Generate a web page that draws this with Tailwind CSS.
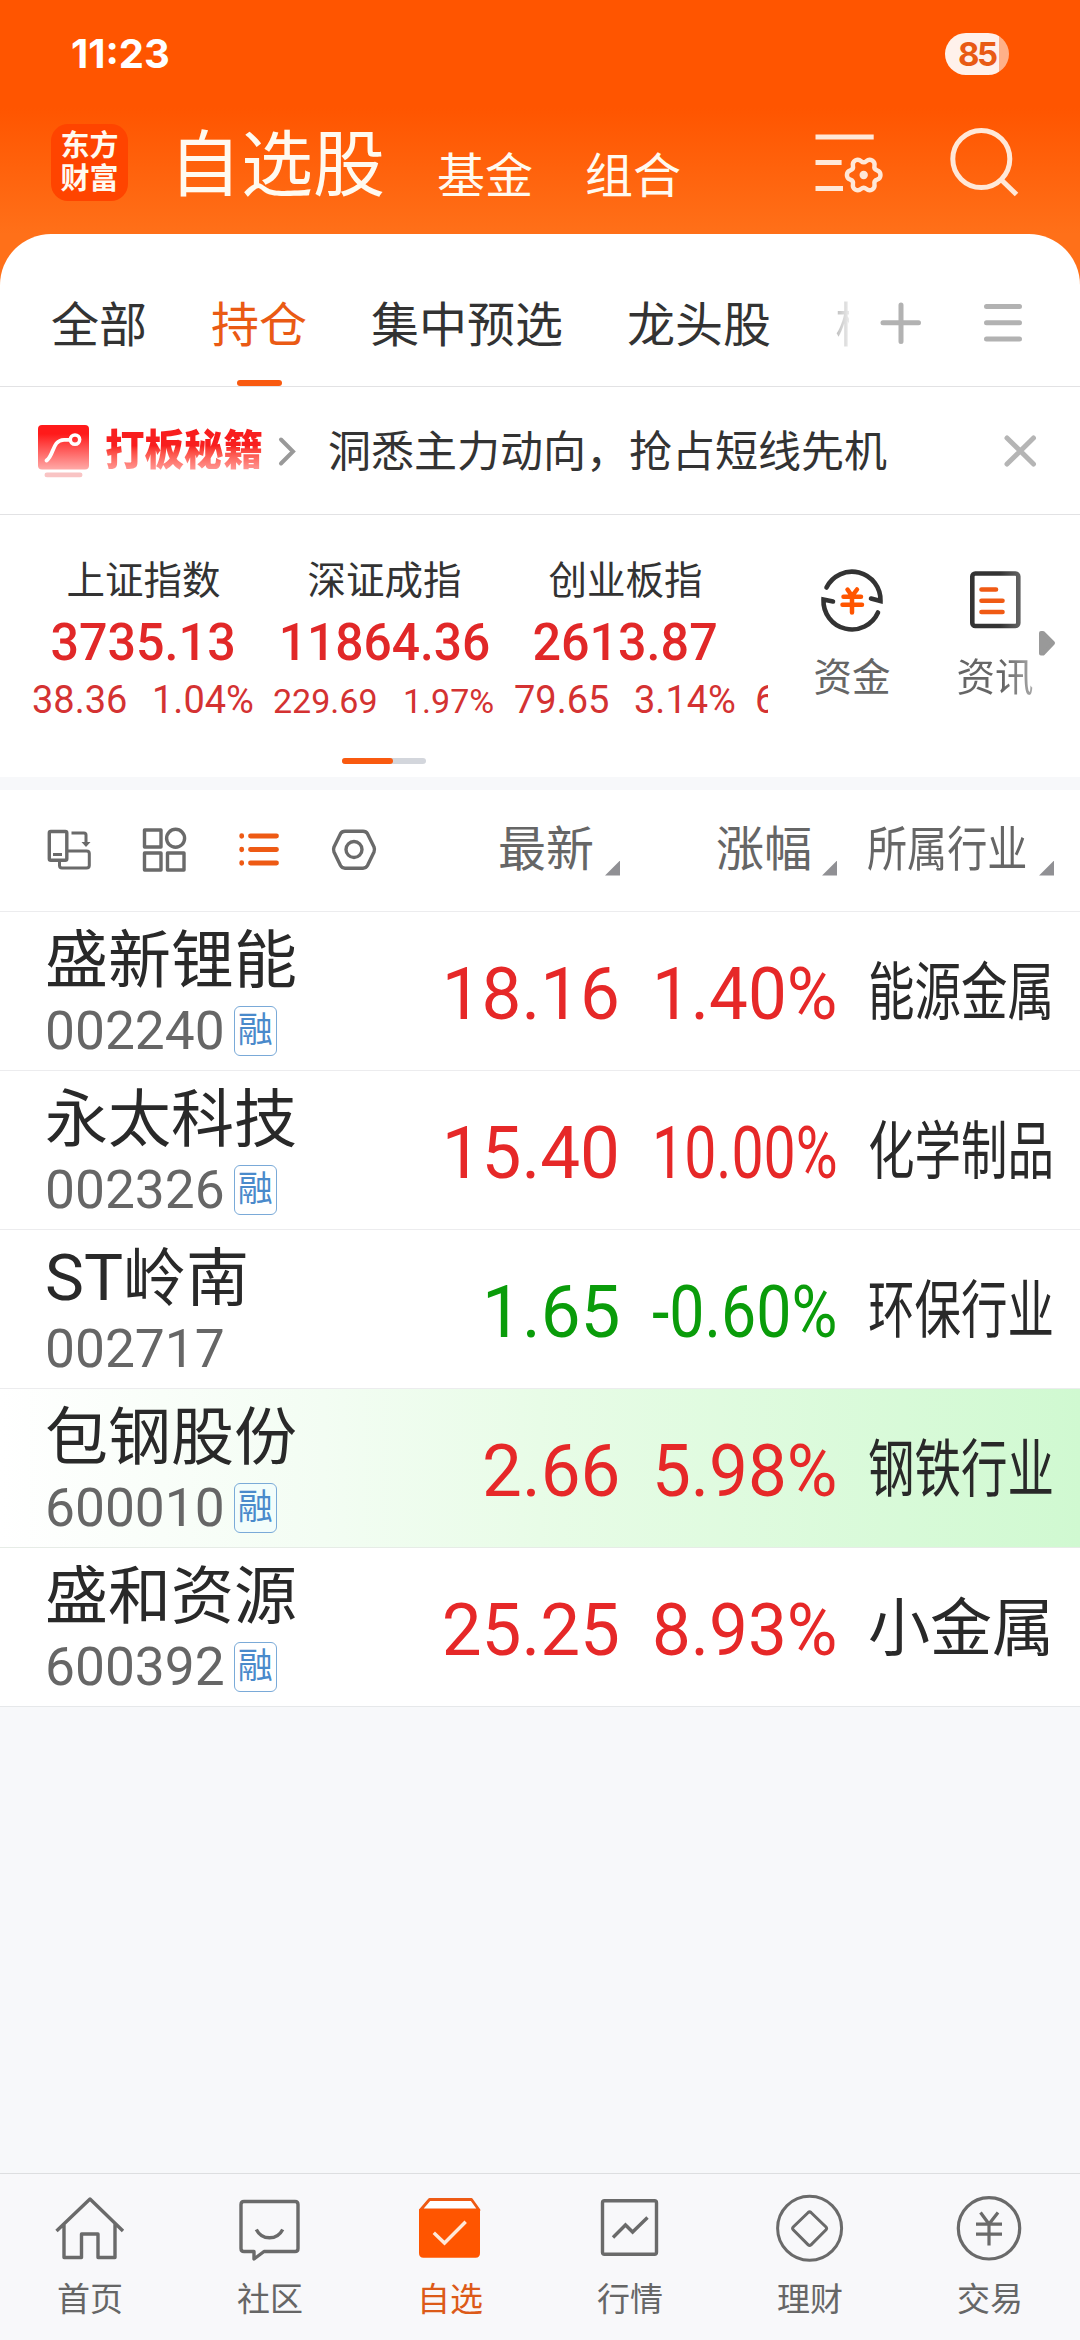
<!DOCTYPE html>
<html lang="zh-CN">
<head>
<meta charset="utf-8">
<meta name="viewport" content="width=device-width">
<title>自选股</title>
<script src="https://cdn.jsdelivr.net/npm/@tailwindcss/browser@4"></script>
</head>
<body class="bg-[#f7f8fa]">
<div class="flex h-[2340px] w-[1080px] flex-col overflow-hidden whitespace-nowrap bg-[#f7f8fa] font-['Roboto','Noto_Sans_CJK_SC',sans-serif] text-[#333]">

  <!-- Status bar and title bar -->
  <header class="h-[300px] shrink-0 bg-[linear-gradient(to_bottom,#ff5500_108px,#ff7019_234px)]">
    <div class="flex h-[108px] items-center justify-between pl-[71px] pr-[71px]">
      <div class="font-['Inter','Roboto',sans-serif] text-[40px] font-bold leading-none text-white">11:23</div>
      <div class="flex h-[42px] w-[64px] items-center rounded-full bg-[linear-gradient(to_right,#fff1eb_54px,#ffb088_54px)] pl-[13px] font-['Inter','Roboto',sans-serif] text-[33px] font-bold leading-none tracking-[-2.5px] text-[#e85a14]">85</div>
    </div>
    <div class="flex h-[126px] text-[#fffaf0]">
      <div class="ml-[51px] mt-[16px] flex h-[77px] w-[77px] flex-col items-center rounded-[17px] bg-[#ff4400] pt-[6px] text-[29px] font-bold leading-[33px]">
        <span>东方</span><span>财富</span>
      </div>
      <div class="ml-[41px] mt-[13px] text-[72px] leading-[90px]">自选股</div>
      <div class="ml-[52px] mt-[39px] text-[48px] leading-[60px]">基金</div>
      <div class="ml-[52px] mt-[39px] text-[48px] leading-[60px]">组合</div>
      <svg class="ml-[129px] mt-[12px] h-[84px] w-[80px]" viewBox="810 120 80 84" fill="none" stroke="#ffe8d8">
        <path d="M815.5 137H873.7M815.5 162.5H841.6M815.5 188.5H843" stroke-width="5"/>
        <g transform="translate(863.7 175)"><path d="M16.800 0Q16.800 3.600 13.400 4.700Q10 5.800 10.750 9.300Q11.500 12.800 8.400 14.600Q5.300 16.400 2.650 13.950Q0 11.500 -2.650 13.950Q-5.300 16.400 -8.400 14.600Q-11.500 12.800 -10.750 9.300Q-10 5.800 -13.400 4.700Q-16.800 3.600 -16.800 0Q-16.800 -3.600 -13.400 -4.700Q-10 -5.800 -10.750 -9.300Q-11.500 -12.800 -8.400 -14.600Q-5.300 -16.400 -2.650 -13.950Q0 -11.500 2.650 -13.950Q5.300 -16.400 8.400 -14.600Q11.500 -12.800 10.750 -9.300Q10 -5.800 13.400 -4.700Q16.800 -3.600 16.800 0Z" stroke-width="4.4"/><circle r="4.2" fill="#ffe8d8" stroke="none"/></g>
      </svg>
      <svg class="ml-[50px] mt-[12px] h-[84px] w-[90px]" viewBox="940 120 90 84" fill="none" stroke="#ffe8d8" stroke-width="5">
        <circle cx="981.3" cy="159" r="28.5"/><path d="M1001.5 180L1016.5 194.5"/>
      </svg>
    </div>
  </header>

  <!-- Group tabs -->
  <nav class="-mt-[66px] flex h-[153px] shrink-0 rounded-t-[51px] border-b border-[#e2e2e4] bg-white pl-[51px] text-[48px] leading-[60px]">
    <div class="flex w-[798px] gap-[64px] overflow-hidden pt-[62px]">
      <span>全部</span>
      <span class="flex flex-col items-center text-[#ea5a14]">持仓<i class="mt-[24px] h-[6px] w-[45px] rounded-full bg-[#f95a10]"></i></span>
      <span>集中预选</span>
      <span>龙头股</span>
      <span class="bg-linear-to-r from-[#bbb] to-white to-[20px] bg-clip-text text-transparent">核心</span>
    </div>
    <svg class="ml-[21px] mt-[56px] h-[66px] w-[180px]" viewBox="870 290 180 66" stroke="#b2b2b2" stroke-width="5" stroke-linecap="round">
      <path d="M883 322.7H918.5M901 305V341.5M986.500 306.500H1019.500M986.500 322.700H1019.500M986.500 339H1019.500"/>
    </svg>
  </nav>

  <!-- Promo strip -->
  <section class="flex h-[128px] shrink-0 items-center border-b border-[#e2e2e4] bg-white pl-[38px]">
    <svg class="h-[56px] w-[52px]" viewBox="38 422 52 56" fill="none">
      <defs><linearGradient id="g" x1="0" y1="0" x2="0" y2="1"><stop offset=".2" stop-color="#ff1a1a"/><stop offset="1" stop-color="#ffaaa8"/></linearGradient></defs>
      <rect x="38" y="424" width="51" height="44.500" rx="4" fill="url(#g)"/>
      <rect x="44.500" y="471.500" width="38" height="4.800" rx="2.400" fill="#f9c4c4"/>
      <path d="M46.500 459.500C54 455 52 439 64 438.800H70" stroke="#fff" stroke-width="3.800" stroke-linecap="round"/>
      <circle cx="75" cy="438.600" r="4.700" stroke="#fff" stroke-width="3.500"/>
    </svg>
    <div class="ml-[15px] origin-center scale-y-[1.06] bg-linear-to-b from-[#f81e1e] from-40% to-[#ff9c9a] to-90% bg-clip-text text-[39.5px] font-black leading-[48px] text-transparent">打板秘籍</div>
    <svg class="ml-[13px] h-[34px] w-[24px]" viewBox="276 433 24 34" fill="none" stroke="#999" stroke-width="4" stroke-linecap="round"><path d="M281 438.500L293 450.500L281 462.500"/></svg>
    <div class="ml-[28px] mt-[2px] text-[43px] leading-[56px]">洞悉主力动向，抢占短线先机</div>
    <svg class="ml-[112px] h-[42px] w-[42px]" viewBox="999 430.500 42 42" stroke="#b5b5b5" stroke-width="5" stroke-linecap="round"><path d="M1007 438.500L1033.500 464.500M1033.500 438.500L1007 464.500"/></svg>
  </section>

  <!-- Market indices -->
  <section class="flex h-[262px] shrink-0 bg-white">
    <div class="w-[768px] overflow-hidden pt-[41px]">
      <div class="flex pl-[23px] text-center">
        <div class="w-[241px]">
          <div class="text-[38.5px] leading-[50px]">上证指数</div>
          <div class="mt-[7px] text-[51px] font-medium leading-[60px] text-[#e12828]"><span class="inline-block scale-x-[.985]">3735.13</span></div>
        </div>
        <div class="w-[241px]">
          <div class="text-[38.5px] leading-[50px]">深证成指</div>
          <div class="mt-[7px] text-[51px] font-medium leading-[60px] text-[#e12828]"><span class="inline-block scale-x-[.975]">11864.36</span></div>
        </div>
        <div class="w-[241px]">
          <div class="text-[38.5px] leading-[50px]">创业板指</div>
          <div class="mt-[7px] text-[51px] font-medium leading-[60px] text-[#e12828]"><span class="inline-block scale-x-[.985]">2613.87</span></div>
        </div>
      </div>
      <div class="mt-[1px] flex items-baseline pl-[32px] text-[38px] leading-[52px] text-[#d43232]">
        <span class="w-[120px] shrink-0">38.36</span><span class="w-[121px] shrink-0">1.04%</span>
        <span class="w-[130px] shrink-0 text-[34px]">229.69</span><span class="w-[111px] shrink-0 text-[34px]">1.97%</span>
        <span class="w-[120px] shrink-0">79.65</span><span class="w-[121px] shrink-0">3.14%</span><span class="shrink-0">6.24</span>
      </div>
      <div class="ml-[342px] mt-[31px] h-[6px] w-[84px] rounded-full bg-[#d3d6dc]"><div class="h-full w-[51px] rounded-full bg-[#f95a10]"></div></div>
    </div>
    <div class="flex pt-[47px] text-[38.5px] leading-[50px] text-[#666]">
      <div class="flex w-[168px] flex-col items-center">
        <svg class="h-[76px] w-[76px]" viewBox="814 563 76 76" fill="none" stroke="#333" stroke-width="4.600" stroke-linecap="round" stroke-linejoin="miter">
          <path d="M826.500 588.500A28.500 28.500 0 0 1 880.500 602L871 599.500M878 613.500A28.500 28.500 0 0 1 823.500 600.500L833 602.500"/>
          <path d="M847.500 590.500L852 597L857 590.500M843.500 597.700H861M842.500 605.700H862M852 597V613.500" stroke="#ff5500" stroke-width="4.500"/>
        </svg>
        <div class="mt-[15px]">资金</div>
      </div>
      <div class="-ml-[12px] flex w-[142px] flex-col items-center">
        <svg class="h-[76px] w-[76px]" viewBox="957 563 76 76" fill="none" stroke="#333" stroke-width="4.600" stroke-linecap="round">
          <defs><linearGradient id="d" x1="0" x2="1"><stop offset=".6" stop-color="#333"/><stop offset="1" stop-color="#606060"/></linearGradient></defs>
          <rect x="972.300" y="574.500" width="46" height="52.500" rx="3" stroke="url(#d)"/>
          <path d="M981.500 590.500H996M981.500 601.700H1002.500M981.500 613H1002.500" stroke="#f05a14"/>
        </svg>
        <div class="mt-[15px] bg-linear-to-r from-[#666] from-60% to-[#aaa] bg-clip-text text-transparent">资讯</div>
      </div>
      <svg class="-ml-[29px] mt-[67px] h-[28px] w-[20px]" viewBox="1036 628 20 28" fill="#999" stroke="#999" stroke-width="4" stroke-linejoin="round"><path d="M1040 632V652.500L1042 652.500L1052 642L1042 632Z"/></svg>
    </div>
  </section>

  <!-- Column headers -->
  <section class="mt-[13px] flex h-[122px] shrink-0 items-center border-b border-[#ececee] bg-white pb-[1px] text-[48px] leading-[60px] text-[#666]">
    <svg class="ml-[40px] h-[60px] w-[350px]" viewBox="40 820.500 350 60" fill="none" stroke="#6a6a6a" stroke-width="3.400" stroke-linejoin="round">
      <rect x="49.300" y="832" width="17.500" height="28.700" rx="1.500"/><path d="M53 855H62M59.500 861V866Q59.500 868.500 62 868.500H86.500Q89.300 868.500 89.300 866V854Q89.300 851.500 86.500 851.500H68M71.500 833.500H84Q86 833.500 86 835.500V844" stroke-width="3"/><path d="M81.500 842.500H90.500L86 847.500Z" fill="#6a6a6a" stroke="none"/>
      <rect x="144.500" y="830.500" width="16.500" height="17"/><circle cx="175.600" cy="838.800" r="9"/><rect x="144.500" y="853.500" width="16.500" height="17"/><rect x="167.500" y="853.500" width="16.500" height="17"/>
      <path d="M250.500 836.500H276.500M250.500 850H276.500M250.500 863.500H276.500M241.700 836.200V836.800M241.700 849.700V850.300M241.700 863.200V863.800" stroke="#ee5a14" stroke-width="4.800" stroke-linecap="round"/>
      <path d="M345 831.700H363Q366 831.700 367.500 834.200L374 847.500Q375 850 374 852.500L367.500 866Q366 868.700 363 868.700H345Q342 868.700 340.500 866L334 852.500Q333 850 334 847.500L340.500 834.200Q342 831.700 345 831.700Z"/><circle cx="354" cy="850" r="8"/>
    </svg>
    <span class="ml-[108px]">最新</span>
    <i class="ml-[11px] mt-[36px] h-[15px] w-[15px] bg-[#909094] [clip-path:polygon(100%_0,100%_100%,0_100%)]"></i>
    <span class="ml-[96px]">涨幅</span>
    <i class="ml-[10px] mt-[36px] h-[15px] w-[15px] bg-[#909094] [clip-path:polygon(100%_0,100%_100%,0_100%)]"></i>
    <span class="ml-[30px] w-[160px]"><span class="inline-block origin-left scale-x-[.835]">所属行业</span></span>
    <i class="ml-[12px] mt-[36px] h-[15px] w-[15px] bg-[#909094] [clip-path:polygon(100%_0,100%_100%,0_100%)]"></i>
  </section>

  <!-- Stock rows -->
  <section class="shrink-0 text-[72px] leading-[84px] text-[#e62828]">
    <div class="flex h-[159px] items-center border-b border-[#ececee] bg-white pl-[45px]">
      <div class="h-full w-[375px] pt-[13px]">
        <div class="text-[63px] leading-[72px] text-[#292929]">盛新锂能</div>
        <div class="mt-[6px] flex items-center text-[53.3px] leading-[56px] text-[#666]">002240<span class="ml-[9px] h-[50px] w-[43px] rounded-[6px] border-[1.5px] border-[#7aaad8] text-center text-[35px] leading-[48px] text-[#4a8acb]">融</span></div>
      </div>
      <div class="flex w-[200px] justify-end pt-[8px]"><span class="origin-right scale-x-[.985]">18.16</span></div>
      <div class="ml-[32px] w-[185px] pt-[8px]"><span class="inline-block origin-left scale-x-[.96]">1.40%</span></div>
      <div class="ml-[31px] w-[186px] pt-[3px] text-[63px] text-[#292929]"><span class="inline-block origin-left scale-x-[.738]">能源金属</span></div>
    </div>
    <div class="flex h-[159px] items-center border-b border-[#ececee] bg-white pl-[45px]">
      <div class="h-full w-[375px] pt-[13px]">
        <div class="text-[63px] leading-[72px] text-[#292929]">永太科技</div>
        <div class="mt-[6px] flex items-center text-[53.3px] leading-[56px] text-[#666]">002326<span class="ml-[9px] h-[50px] w-[43px] rounded-[6px] border-[1.5px] border-[#7aaad8] text-center text-[35px] leading-[48px] text-[#4a8acb]">融</span></div>
      </div>
      <div class="flex w-[200px] justify-end pt-[8px]"><span class="origin-right scale-x-[.985]">15.40</span></div>
      <div class="ml-[32px] w-[185px] pt-[8px]"><span class="inline-block origin-left scale-x-[.795]">10.00%</span></div>
      <div class="ml-[31px] w-[186px] pt-[3px] text-[63px] text-[#292929]"><span class="inline-block origin-left scale-x-[.738]">化学制品</span></div>
    </div>
    <div class="flex h-[159px] items-center border-b border-[#ececee] bg-white pl-[45px] text-[#0a9c0a]">
      <div class="h-full w-[375px] pt-[13px]">
        <div class="text-[63px] leading-[72px] text-[#292929]"><span class="text-[65.5px] leading-none">ST</span>岭南</div>
        <div class="mt-[6px] text-[53.3px] leading-[56px] text-[#666]">002717</div>
      </div>
      <div class="flex w-[200px] justify-end pt-[8px]"><span class="origin-right scale-x-[.985]">1.65</span></div>
      <div class="ml-[32px] w-[185px] pt-[8px]"><span class="inline-block origin-left scale-x-[.87]">-0.60%</span></div>
      <div class="ml-[31px] w-[186px] pt-[3px] text-[63px] text-[#292929]"><span class="inline-block origin-left scale-x-[.738]">环保行业</span></div>
    </div>
    <div class="flex h-[159px] items-center border-b border-[#e6ece6] bg-[linear-gradient(to_right,#ffffff,#f3fdf3_30%,#e8fce7_50%,#d0f9d1)] pl-[45px]">
      <div class="h-full w-[375px] pt-[13px]">
        <div class="text-[63px] leading-[72px] text-[#292929]">包钢股份</div>
        <div class="mt-[6px] flex items-center text-[53.3px] leading-[56px] text-[#666]">600010<span class="ml-[9px] h-[50px] w-[43px] rounded-[6px] border-[1.5px] border-[#7aaad8] bg-[#f2fdfb] text-center text-[35px] leading-[48px] text-[#4a8acb]">融</span></div>
      </div>
      <div class="flex w-[200px] justify-end pt-[8px]"><span class="origin-right scale-x-[.985]">2.66</span></div>
      <div class="ml-[32px] w-[185px] pt-[8px]"><span class="inline-block origin-left scale-x-[.96]">5.98%</span></div>
      <div class="ml-[31px] w-[186px] pt-[3px] text-[63px] text-[#292929]"><span class="inline-block origin-left scale-x-[.738]">钢铁行业</span></div>
    </div>
    <div class="flex h-[159px] items-center border-b border-[#e6e8ea] bg-white pl-[45px]">
      <div class="h-full w-[375px] pt-[13px]">
        <div class="text-[63px] leading-[72px] text-[#292929]">盛和资源</div>
        <div class="mt-[6px] flex items-center text-[53.3px] leading-[56px] text-[#666]">600392<span class="ml-[9px] h-[50px] w-[43px] rounded-[6px] border-[1.5px] border-[#7aaad8] text-center text-[35px] leading-[48px] text-[#4a8acb]">融</span></div>
      </div>
      <div class="flex w-[200px] justify-end pt-[8px]"><span class="origin-right scale-x-[.985]">25.25</span></div>
      <div class="ml-[32px] w-[185px] pt-[8px]"><span class="inline-block origin-left scale-x-[.96]">8.93%</span></div>
      <div class="ml-[31px] w-[186px] pt-[3px] text-[63px] text-[#292929]"><span class="inline-block origin-left scale-x-[.985]">小金属</span></div>
    </div>
  </section>

  <!-- Bottom navigation -->
  <footer class="mt-auto grid h-[167px] shrink-0 grid-cols-6 border-t border-[#dddee0] bg-[#f8f8fa] pt-[16px] text-center text-[33px] leading-[44px] text-[#666]">
    <div>
      <svg class="h-[74px] w-[180px]" viewBox="0 0 180 74" fill="none" stroke="#6a6a6a" stroke-width="3.400"><path d="M56.500 41L90 9L123 41M64 34V67.500H81.500V44H98V67.500H115V34" stroke-linejoin="round"/></svg>
      <div class="mt-[14px]">首页</div>
    </div>
    <div>
      <svg class="h-[74px] w-[180px]" viewBox="0 0 180 74" fill="none" stroke="#6a6a6a" stroke-width="3.400" stroke-linejoin="round"><path d="M64 11.500H115Q118 11.500 118 14.500V58.500Q118 61.500 115 61.500H84L74 69V61.500H64Q61 61.500 61 58.500V14.500Q61 11.500 64 11.500ZM76.300 39.500Q80.500 47.800 89.500 47.800T102.700 39.500"/></svg>
      <div class="mt-[14px]">社区</div>
    </div>
    <div class="text-[#dc5a18]">
      <svg class="h-[74px] w-[180px]" viewBox="0 0 180 74" fill="none"><path d="M60.500 20L69.500 9.500H111.500L119 20Z" fill="#fff" stroke="#ee5a14" stroke-width="2.800" stroke-linejoin="round"/><path d="M59 19.300H120V63Q120 67.800 115.500 67.800H63.500Q59 67.800 59 63Z" fill="#ff5500"/><path d="M73.800 42.800L84.500 53L105.700 31.700" stroke="#ffe8d8" stroke-width="3.400"/></svg>
      <div class="mt-[14px]">自选</div>
    </div>
    <div>
      <svg class="h-[74px] w-[180px]" viewBox="0 0 180 74" fill="none" stroke="#6a6a6a" stroke-width="3.400"><rect x="62.500" y="10.800" width="54" height="53.500" rx="2"/><path d="M73 47.500L85.500 35L92.600 42L107.500 27.500"/></svg>
      <div class="mt-[14px]">行情</div>
    </div>
    <div>
      <svg class="h-[74px] w-[180px]" viewBox="0 0 180 74" fill="none" stroke="#6a6a6a" stroke-width="3"><circle cx="89.600" cy="38.300" r="32"/><path d="M88.200 22.500Q89.600 21.300 91 22.500L106 37Q107.200 38.400 106 39.800L91 54.800Q89.600 56 88.200 54.800L73.200 39.800Q72 38.400 73.200 37Z"/></svg>
      <div class="mt-[14px]">理财</div>
    </div>
    <div>
      <svg class="h-[74px] w-[180px]" viewBox="0 0 180 74" fill="none" stroke="#6a6a6a" stroke-width="3.200"><circle cx="89" cy="38.300" r="30.700"/><path d="M80.500 22.500L89 34L98 22.500M76 34.200H102M76 44.200H102M89 34V55.500"/></svg>
      <div class="mt-[14px]">交易</div>
    </div>
  </footer>
</div>
</body>
</html>
